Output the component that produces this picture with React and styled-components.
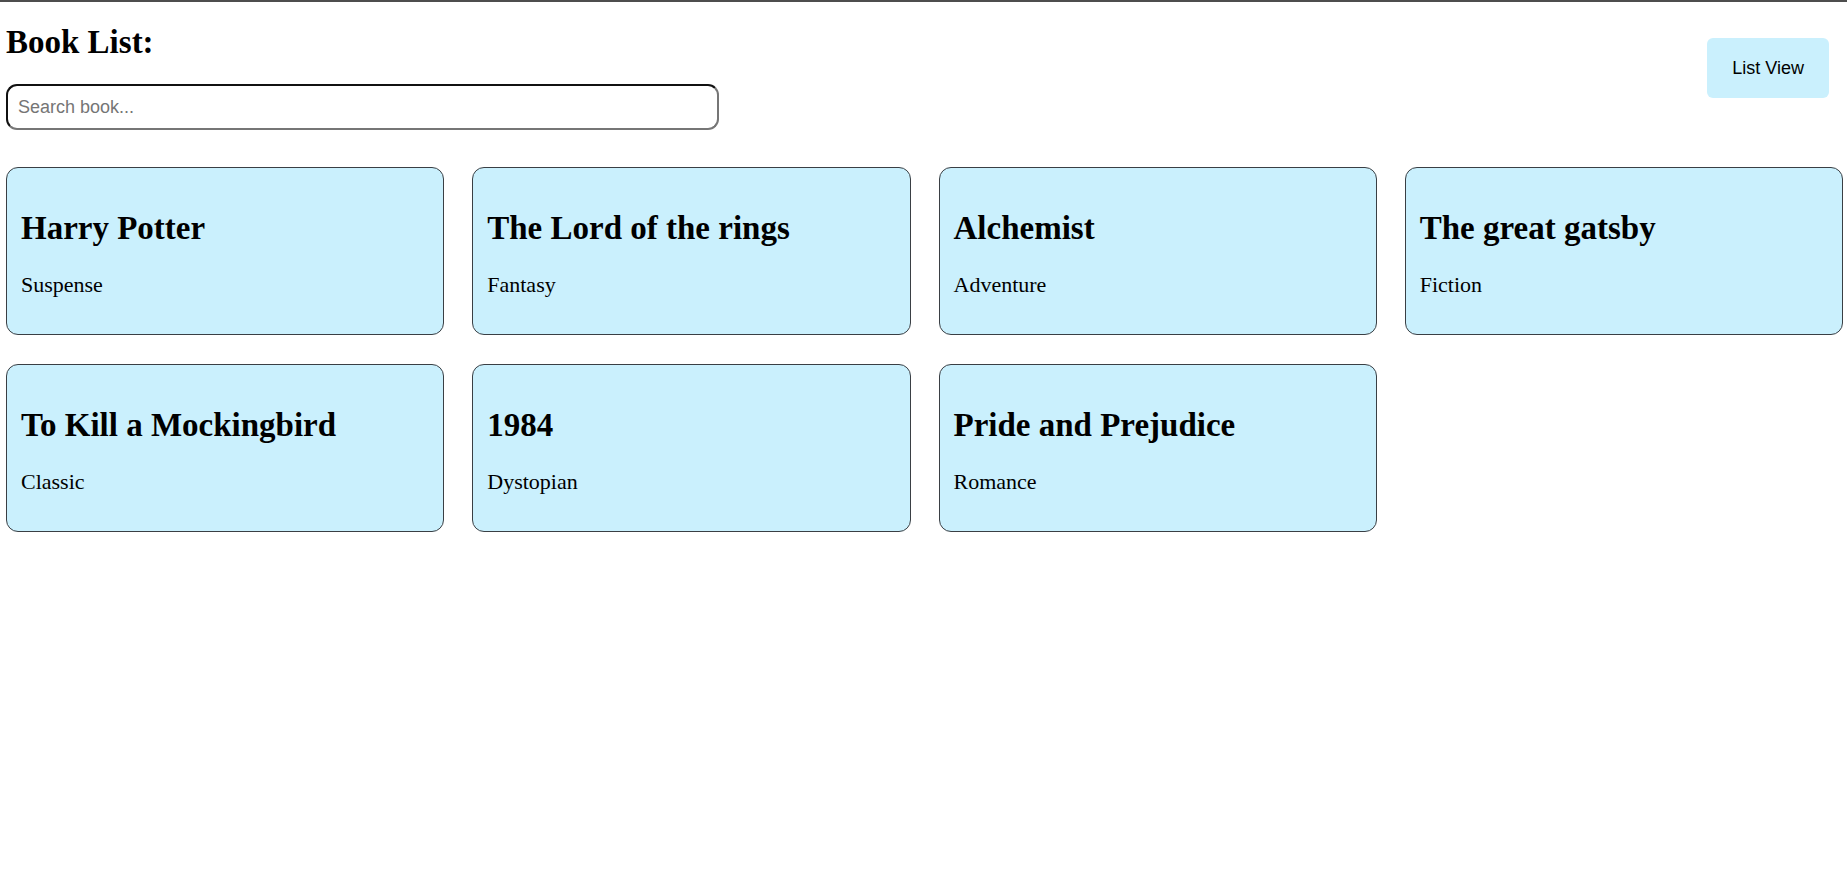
import React, { useState } from "react";
import styled, { createGlobalStyle } from "styled-components";

const GlobalStyle = createGlobalStyle`
  html, body { margin: 0; padding: 0; background: #ffffff; }
  body {
    border-top: 2px solid #4d4d4d;
    font-family: "Liberation Serif", "Times New Roman", serif;
    color: #000;
  }
`;

const Page = styled.div`
  padding: 0 4px 40px 6px;
`;

const Header = styled.header`
  display: flex;
  justify-content: space-between;
  align-items: center;
`;

const HeaderLeft = styled.div`
  display: flex;
  flex-direction: column;
  align-items: flex-start;
`;

const Title = styled.h1`
  font-size: 33px;
  font-weight: bold;
  margin: 21px 0 23px;
  line-height: 38px;
`;

const SearchInput = styled.input`
  box-sizing: border-box;
  width: 713px;
  height: 46px;
  padding: 0 10px;
  border: 2px solid;
  border-color: #111111 #767676 #767676 #111111;
  border-radius: 11px;
  font-family: "Liberation Sans", Arial, sans-serif;
  font-size: 18px;
  color: #000;
  outline: none;
  background: #fff;
  &::placeholder { color: #757575; }
`;

const ViewButton = styled.button`
  margin-right: 14px;
  margin-top: 4px;
  padding: 0 25px;
  height: 60px;
  border: none;
  border-radius: 6px;
  background: #caf0fd;
  font-family: "Liberation Sans", Arial, sans-serif;
  font-size: 18px;
  color: #000;
  cursor: pointer;
`;

const Grid = styled.div`
  display: grid;
  grid-template-columns: repeat(${(p) => (p.$list ? 1 : 4)}, 1fr);
  column-gap: 28px;
  row-gap: 29px;
  margin-top: 37px;
`;

const Card = styled.div`
  background: #caf0fd;
  border: 1px solid #3a3f44;
  border-radius: 12px;
  padding: 20px 14px;
  height: 168px;
  box-sizing: border-box;
`;

const CardTitle = styled.h1`
  font-size: 33px;
  font-weight: bold;
  line-height: 38px;
  margin: 0 0 25px;
  padding-top: 21px;
`;

const Genre = styled.p`
  font-size: 22px;
  line-height: 25px;
  margin: 0;
`;

const books = [
  { title: "Harry Potter", genre: "Suspense" },
  { title: "The Lord of the rings", genre: "Fantasy" },
  { title: "Alchemist", genre: "Adventure" },
  { title: "The great gatsby", genre: "Fiction" },
  { title: "To Kill a Mockingbird", genre: "Classic" },
  { title: "1984", genre: "Dystopian" },
  { title: "Pride and Prejudice", genre: "Romance" },
];

export default function App() {
  const [query, setQuery] = useState("");
  const [list, setList] = useState(false);
  const shown = books.filter((b) =>
    b.title.toLowerCase().includes(query.toLowerCase())
  );
  return (
    <Page>
      <GlobalStyle />
      <Header>
        <HeaderLeft>
          <Title>Book List:</Title>
          <SearchInput
            placeholder="Search book..."
            value={query}
            onChange={(e) => setQuery(e.target.value)}
          />
        </HeaderLeft>
        <ViewButton onClick={() => setList((v) => !v)}>
          {list ? "Grid View" : "List View"}
        </ViewButton>
      </Header>
      <Grid $list={list}>
        {shown.map((b) => (
          <Card key={b.title}>
            <CardTitle>{b.title}</CardTitle>
            <Genre>{b.genre}</Genre>
          </Card>
        ))}
      </Grid>
    </Page>
  );
}
